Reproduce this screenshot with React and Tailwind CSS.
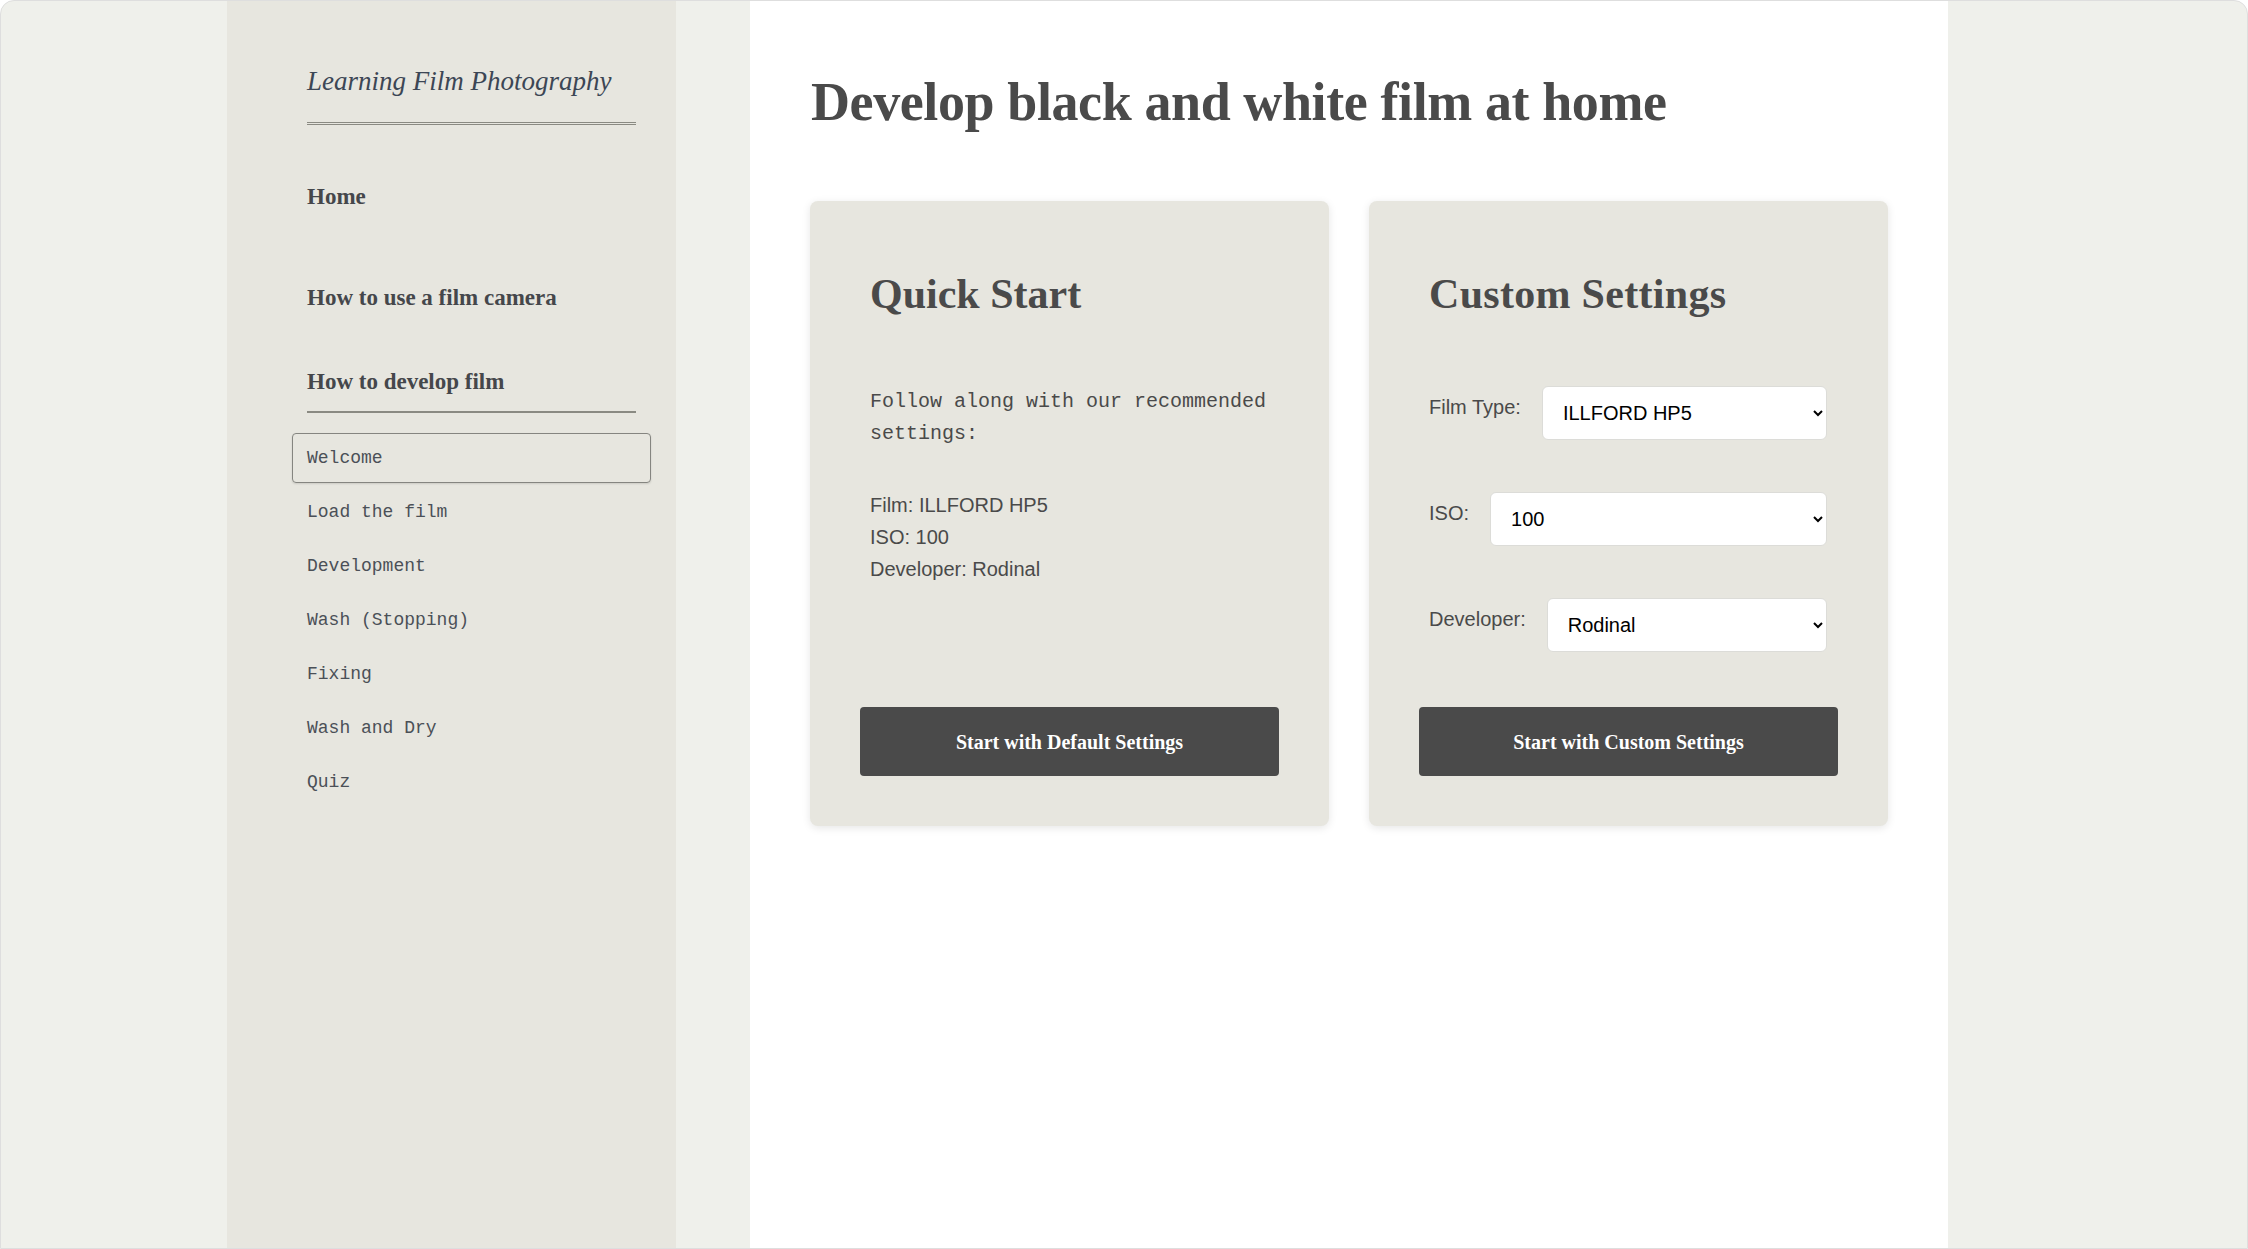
import { useState } from 'react'

// Sidebar lesson steps — first one is the active page
const STEPS = ['Welcome', 'Load the film', 'Development', 'Wash (Stopping)', 'Fixing', 'Wash and Dry', 'Quiz']

const serif = "font-['Liberation_Serif',serif]"
const mono = "font-['Liberation_Mono',monospace]"
const sans = "font-['Liberation_Sans',Arial,sans-serif]"

function Sidebar() {
  return (
    <div className="w-[449px] shrink-0 bg-[#e7e6df] pl-[80px] pr-[40px] pt-[64px]">
      <div className="border-b-[3px] border-double border-[#8a8a82] pb-[25px]">
        <div className={`${serif} italic text-[27px] leading-[32px] text-[#3c4655]`}>Learning Film Photography</div>
      </div>

      <nav className={`${serif} font-bold text-[23px] leading-[28px] text-[#45474b]`}>
        <div className="mt-[58px]">Home</div>
        <div className="mt-[73px]">How to use a film camera</div>
        <div className="mt-[56px] pb-[15px] border-b-2 border-[#8a8a82]">How to develop film</div>
      </nav>

      <ul className={`${mono} text-[18px] leading-[24px] text-[#4b5057] mt-[20px] -mx-[15px] flex flex-col gap-[4px]`}>
        {STEPS.map((s, i) => (
          <li key={s}
            className={`px-[14px] py-[12px] rounded-[4px] border ${i === 0 ? 'border-[#858580] shadow-[0_1px_2px_rgba(0,0,0,0.12)]' : 'border-transparent'}`}>
            {s}
          </li>
        ))}
      </ul>
    </div>
  )
}

function SelectRow({ label, value, options, onChange }) {
  return (
    <div className="flex items-start">
      <label className={`${sans} text-[20px] leading-[24px] text-[#4a4a4a] pt-[9px] shrink-0 mr-[21px]`}>{label}</label>
      <select value={value} onChange={e => onChange(e.target.value)}
        className={`${sans} flex-1 h-[54px] bg-white border border-[#dcdcd8] rounded-[6px] pl-[16px] pr-[8px] text-[20px] text-black`}>
        {options.map(o => <option key={o}>{o}</option>)}
      </select>
    </div>
  )
}

export default function App() {
  const [film, setFilm] = useState('ILLFORD HP5')
  const [iso, setIso] = useState('100')
  const [dev, setDev] = useState('Rodinal')

  return (
    <div className="h-[1249px] w-full overflow-hidden bg-[#eff0eb] border border-[#dedede] rounded-t-[14px] flex pl-[226px]">
      <Sidebar />

      <main className="w-[1198px] shrink-0 ml-[74px] bg-white px-[60px] pt-[69px]">
        <h1 className={`${serif} font-bold text-[54px] leading-[64px] tracking-[-0.4px] text-[#4a4a4a] pl-[1px]`}>
          Develop black and white film at home
        </h1>

        <div className="grid grid-cols-2 gap-[40px] mt-[67px]">
          {/* Quick start */}
          <div className="bg-[#e7e6df] rounded-[8px] shadow-[0_2px_8px_rgba(0,0,0,0.1)] flex flex-col px-[50px] pt-[67px] pb-[50px]">
            <h2 className={`${serif} font-bold text-[42px] leading-[52px] text-[#4a4a4a] px-[10px]`}>Quick Start</h2>
            <p className={`${mono} text-[20px] leading-[32px] text-[#4a4a4a] px-[10px] mt-[66px]`}>
              Follow along with our recommended settings:
            </p>
            <div className={`${sans} text-[20px] leading-[32px] text-[#4a4a4a] px-[10px] mt-[39px]`}>
              <div>Film: ILLFORD HP5</div>
              <div>ISO: 100</div>
              <div>Developer: Rodinal</div>
            </div>
            <button className={`${serif} font-bold text-[20px] text-white bg-[#4a4a4a] rounded-[4px] h-[69px] w-full mt-auto`}>
              Start with Default Settings
            </button>
          </div>

          {/* Custom settings */}
          <div className="bg-[#e7e6df] rounded-[8px] shadow-[0_2px_8px_rgba(0,0,0,0.1)] flex flex-col px-[50px] pt-[67px] pb-[50px]">
            <h2 className={`${serif} font-bold text-[42px] leading-[52px] tracking-[0.3px] text-[#4a4a4a] px-[10px]`}>Custom Settings</h2>
            <div className="flex flex-col gap-[52px] mt-[66px] pl-[10px] pr-[11px]">
              <SelectRow label="Film Type:" value={film} onChange={setFilm}
                options={['ILLFORD HP5', 'ILLFORD FP4', 'Kodak Tri-X 400', 'Kodak T-Max 100']} />
              <SelectRow label="ISO:" value={iso} onChange={setIso}
                options={['100', '200', '400', '800', '1600']} />
              <SelectRow label="Developer:" value={dev} onChange={setDev}
                options={['Rodinal', 'HC-110', 'D-76', 'Ilfosol 3']} />
            </div>
            <button className={`${serif} font-bold text-[20px] text-white bg-[#4a4a4a] rounded-[4px] h-[69px] w-full mt-[55px]`}>
              Start with Custom Settings
            </button>
          </div>
        </div>
      </main>
    </div>
  )
}
